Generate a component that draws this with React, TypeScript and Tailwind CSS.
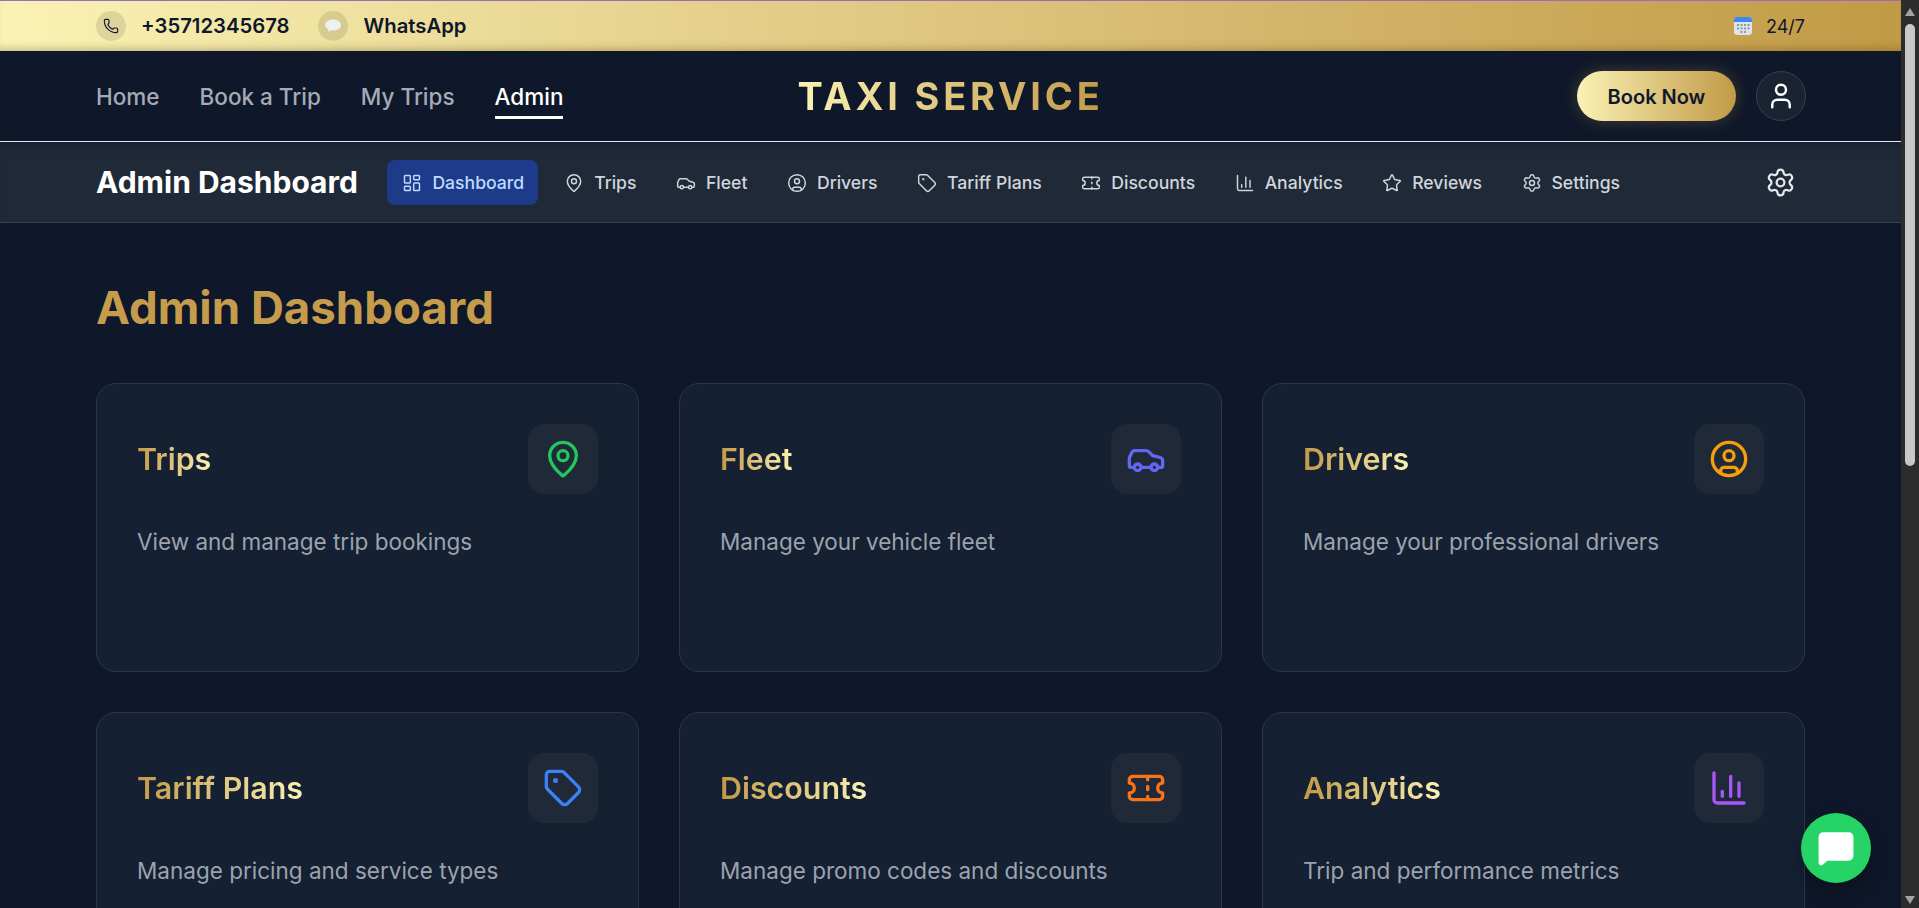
import {
  Car,
  ChartColumn,
  CircleUser,
  LayoutDashboard,
  MapPin,
  MessageSquare,
  Phone,
  Settings,
  Star,
  Tag,
  Ticket,
  User,
} from 'lucide-react';

const topLinks = ['Home', 'Book a Trip', 'My Trips'];

const adminLinks = [
  { label: 'Trips', icon: MapPin },
  { label: 'Fleet', icon: Car },
  { label: 'Drivers', icon: CircleUser },
  { label: 'Tariff Plans', icon: Tag },
  { label: 'Discounts', icon: Ticket },
  { label: 'Analytics', icon: ChartColumn },
  { label: 'Reviews', icon: Star },
  { label: 'Settings', icon: Settings },
];

const cards = [
  { title: 'Trips', text: 'View and manage trip bookings', icon: MapPin, color: 'text-[#22c55e]' },
  { title: 'Fleet', text: 'Manage your vehicle fleet', icon: Car, color: 'text-[#6366f1]' },
  { title: 'Drivers', text: 'Manage your professional drivers', icon: CircleUser, color: 'text-[#f59e0b]' },
  { title: 'Tariff Plans', text: 'Manage pricing and service types', icon: Tag, color: 'text-[#3b82f6]' },
  { title: 'Discounts', text: 'Manage promo codes and discounts', icon: Ticket, color: 'text-[#f97316]' },
  { title: 'Analytics', text: 'Trip and performance metrics', icon: ChartColumn, color: 'text-[#a855f7]' },
];

function Bubble() {
  return (
    <svg width="20" height="20" viewBox="0 0 20 20">
      <path d="M10 3.500c4.500 0 8 2.400 8 5.500s-3.500 5.500-8 5.500c-.8 0-1.500-.1-2.200-.2L5 16l.4-2.800C3.300 12.200 2 10.700 2 9c0-3.100 3.500-5.500 8-5.500z" fill="#eef0f2" />
    </svg>
  );
}

function CalendarGlyph() {
  return (
    <svg width="18" height="18" viewBox="0 0 18 18">
      <rect x="0" y="0" width="18" height="18" rx="3" fill="#dfe3ea" />
      <path d="M0 5V3a3 3 0 0 1 3-3h12a3 3 0 0 1 3 3v2z" fill="#3b88f0" />
      <g fill="#8d99ad">
        <rect x="3" y="7" width="2" height="2" />
        <rect x="6.500" y="7" width="2" height="2" />
        <rect x="10" y="7" width="2" height="2" />
        <rect x="13.500" y="7" width="2" height="2" />
        <rect x="3" y="10.500" width="2" height="2" />
        <rect x="6.500" y="10.500" width="2" height="2" />
        <rect x="10" y="10.500" width="2" height="2" />
        <rect x="13.500" y="10.500" width="2" height="2" />
        <rect x="6.500" y="14" width="2" height="2" />
        <rect x="10" y="14" width="2" height="2" />
      </g>
    </svg>
  );
}

function FakeScrollbar() {
  return (
    <div className="flex w-[18px] shrink-0 flex-col items-center bg-[#2c2c2c]">
      <svg width="12" height="24" viewBox="0 0 12 24" className="shrink-0">
        <path d="M6 8l5 8H1z" fill="#a3a3a3" />
      </svg>
      <div className="h-[442px] w-[10px] rounded-full bg-[#c8c8c8]" />
      <svg width="12" height="24" viewBox="0 0 12 24" className="mt-auto shrink-0">
        <path d="M6 20L1 12h10z" fill="#a3a3a3" />
      </svg>
    </div>
  );
}

export default function App() {
  return (
    <div className="flex h-screen w-full overflow-hidden bg-[#0f172a] font-['Inter',sans-serif]">
      <div className="relative flex min-w-0 flex-1 flex-col overflow-hidden">
        <div className="h-px shrink-0 bg-[#9b6bc4]" />
        <div className="flex h-[50px] shrink-0 items-center justify-between bg-gradient-to-r from-[#faf2b4] to-[#c19a45] px-24 text-[#0f172a] shadow-[inset_0_-8px_8px_-6px_rgba(70,50,10,0.3)]">
          <div className="flex items-center gap-[28px]">
            <div className="flex items-center gap-[15px]">
              <span className="flex size-[30px] items-center justify-center rounded-full bg-black/10">
                <Phone size={16} strokeWidth={1.75} />
              </span>
              <span className="text-[20.3px] font-semibold">+35712345678</span>
            </div>
            <div className="flex items-center gap-4">
              <span className="flex size-[30px] items-center justify-center rounded-full bg-black/10">
                <Bubble />
              </span>
              <span className="text-[20.3px] font-semibold">WhatsApp</span>
            </div>
          </div>
          <div className="flex items-center gap-[14px]">
            <CalendarGlyph />
            <span className="text-[18px]">24/7</span>
          </div>
        </div>

        <nav className="grid h-[91px] shrink-0 grid-cols-3 items-center border-b border-[#e5e7eb] bg-[#0f172a] px-24">
          <div className="flex items-center gap-10 pt-[2px] text-[22.5px] font-medium text-[#a5abb6]">
            {topLinks.map((link) => (
              <a key={link}>{link}</a>
            ))}
            <a className="border-b-[3px] border-white pb-[2px] pt-[5px] text-white">Admin</a>
          </div>
          <div className="justify-self-center bg-gradient-to-r from-[#faf2b4] to-[#c19a45] bg-clip-text text-[38px] font-bold tracking-[0.1em] text-transparent">
            TAXI SERVICE
          </div>
          <div className="mr-[-1px] flex items-center gap-5 justify-self-end">
            <button className="h-[50px] w-[159px] rounded-full bg-gradient-to-r from-[#faf2b4] to-[#c19a45] pt-[2px] text-[20px] font-semibold text-[#0f172a] shadow-[0_0_16px_rgba(193,154,69,0.3)]">
              Book Now
            </button>
            <button className="flex size-[50px] items-center justify-center rounded-full border border-[#374151] bg-[#1a2332] text-white">
              <User size={30} strokeWidth={2} />
            </button>
          </div>
        </nav>

        <div className="flex h-[81px] shrink-0 items-center border-b border-[#374151] bg-[#1f2937] pl-24 pr-[105px] shadow-[inset_0_10px_10px_-8px_rgba(15,23,42,0.6)]">
          <h2 className="mr-[29.5px] text-[30px] font-bold text-white">Admin Dashboard</h2>
          <div className="flex items-center gap-2 pt-px">
            <a className="mr-[2.5px] flex h-[45px] items-center gap-2.5 rounded-lg bg-[#1e3a8a] pl-[15px] pr-[14px] text-[17.6px] font-medium text-[#bfdbfe]">
              <LayoutDashboard size={20} strokeWidth={1.75} />
              <span className="pt-[2px]">Dashboard</span>
            </a>
            {adminLinks.map(({ label, icon: Icon }) => (
              <a key={label} className="flex h-[45px] items-center gap-2.5 pl-[15.5px] pr-4 text-[17.6px] font-medium text-[#d1d5db]">
                <Icon size={20} strokeWidth={1.75} />
                <span className="pt-[2px]">{label}</span>
              </a>
            ))}
          </div>
          <button className="ml-auto text-[#e5e7eb]">
            <Settings size={31} strokeWidth={1.75} />
          </button>
        </div>

        <main className="flex-1 overflow-hidden px-24 pt-[58px]">
          <h1 className="mb-[48px] text-[45.6px] font-bold leading-[54px] text-[#c49c4c]">Admin Dashboard</h1>
          <div className="grid grid-cols-3 gap-10">
            {cards.map(({ title, text, icon: Icon, color }) => (
              <div key={title} className="h-[289px] rounded-[20px] border border-[#2b3747] bg-[#152032] p-10">
                <div className="flex items-center justify-between">
                  <h3 className="w-fit bg-gradient-to-r from-[#c19a45] to-[#faf2b4] bg-clip-text pt-[2px] text-[30.4px] font-semibold text-transparent">
                    {title}
                  </h3>
                  <span className={`flex size-[70px] items-center justify-center rounded-2xl bg-[#1f2937] ${color}`}>
                    <Icon size={40} strokeWidth={2} />
                  </span>
                </div>
                <p className="mt-[32px] text-[22.5px] leading-8 text-[#9ca3af]">{text}</p>
              </div>
            ))}
          </div>
        </main>

        <button className="absolute bottom-[25px] right-[30px] flex size-[70px] items-center justify-center rounded-full bg-[#25d366] text-white shadow-[0_8px_20px_rgba(0,0,0,0.3)]">
          <MessageSquare size={38} strokeWidth={2} fill="currentColor" />
        </button>
      </div>
      <FakeScrollbar />
    </div>
  );
}
